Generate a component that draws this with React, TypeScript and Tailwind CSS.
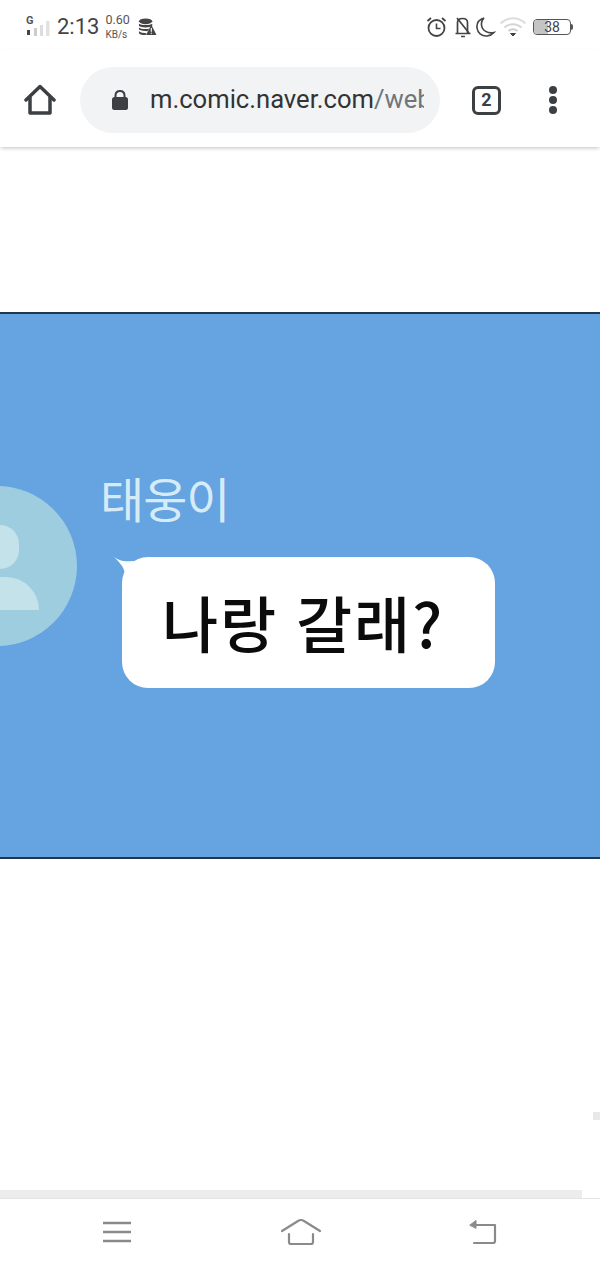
export default function App() {
  const sans = { fontFamily: '"Roboto","Liberation Sans",sans-serif' };
  const kr = { fontFamily: '"Noto Sans CJK KR",sans-serif' };
  return (
    <div className="w-[600px] h-[1267px] bg-white flex flex-col overflow-hidden" style={sans}>
      {/* status bar */}
      <div className="h-[50px] shrink-0 flex items-center pl-[26px] pr-[27px] pt-[3px] text-[#444]">
        <svg width="26" height="24" viewBox="0 0 26 24" className="mb-[1px]">
          <text x="0" y="10" fontSize="11" fontWeight="700" fill="#555" fontFamily="Roboto">G</text>
          <rect x="1" y="16" width="3" height="5" fill="#444" />
          <rect x="8" y="14" width="3" height="8" fill="#ccc" />
          <rect x="14" y="11" width="3" height="11" fill="#ddd" />
          <rect x="20" y="7" width="3.5" height="15" fill="#e2e2e2" />
        </svg>
        <span className="ml-[5px] text-[22px] leading-none text-[#444]">2:13</span>
        <div className="ml-[6px] w-[25px] flex flex-col items-start text-[#555]">
          <span className="text-[12.500px] leading-[14px]">0.60</span>
          <span className="text-[10px] leading-[13px] mt-[1px]">KB/s</span>
        </div>
        <svg width="19" height="20" viewBox="0 0 20 20" className="ml-[8px]">
          <ellipse cx="8" cy="4" rx="7" ry="3" fill="#444" />
          <path d="M1 6.500c2 2 12 2 14 0V9c-2 2-12 2-14 0zM1 10.500c2 2 9 2 11 1l-2 3c-3 0-7-.5-9-1.800zM1 14.500c2 1.500 5 2 8 2l-1 2c-3 0-6-.5-7-2z" fill="#444" />
          <path d="M14 7.500l5.500 11h-11z" fill="#444" />
          <rect x="13.400" y="11" width="1.200" height="4" fill="#fff" />
          <rect x="13.400" y="16" width="1.200" height="1.200" fill="#fff" />
        </svg>
        <div className="flex-1" />
        <svg width="21" height="22" viewBox="0 0 21 22" fill="none" stroke="#444" strokeWidth="1.800">
          <circle cx="10.500" cy="12" r="8" />
          <path d="M10.500 7.500V12.500H14.500" strokeWidth="1.600" />
          <path d="M1.500 5L5 2M19.500 5L16 2" />
        </svg>
        <svg width="18" height="22" viewBox="0 0 18 22" fill="none" stroke="#444" strokeWidth="1.700" className="ml-[7px]">
          <path d="M1.500 17.500H16.500M3.500 17.500V6.500C3.500 4 5.500 2.500 8.500 2.500S13.500 4 13.500 6.500V17.500" />
          <path d="M7 20.500H11M3 2L15 17" />
        </svg>
        <svg width="21" height="22" viewBox="0 0 21 22" fill="none" stroke="#444" strokeWidth="1.600" className="ml-[3px]">
          <path d="M9 2C4 3.500 1.500 7.500 2 12c.6 5 5 8.500 10 8 3-.3 5.500-1.800 7-3.500-6 1.500-12-2-12.500-7.500C6.200 6.500 7 4 9 2z" />
        </svg>
        <svg width="28" height="22" viewBox="0 0 28 22" fill="none" stroke="#ddd" strokeWidth="2" className="ml-[3px]">
          <path d="M1.500 7.500C9 .5 19 .5 26.500 7.500" />
          <path d="M5.500 11.500C10.500 7 17.500 7 22.500 11.500" stroke="#d5d5d5" />
          <path d="M9.500 15C12.500 12.700 15.500 12.700 18.500 15" stroke="#ccc" />
          <path d="M11.500 17.500H16.500L14 20z" fill="#444" stroke="#444" strokeWidth="1" strokeLinejoin="round" />
        </svg>
        <div className="ml-[6px] relative w-[38px] h-[16px] border border-[#555] rounded-[4px] overflow-hidden flex items-center justify-center">
          <div className="absolute left-0 top-0 bottom-0 w-[14px] bg-[#c4c4c4]" />
          <span className="relative text-[14px] leading-none text-[#444]">38</span>
        </div>
        <div className="w-[2px] h-[6px] bg-[#555] rounded-r-sm" />
      </div>

      {/* browser toolbar */}
      <div className="h-[97px] shrink-0 flex items-center shadow-[0_2px_4px_-1px_rgba(0,0,0,0.25)] relative pt-[3px] bg-white">
        <svg width="32" height="32" viewBox="0 0 32 32" fill="none" stroke="#3c4043" strokeWidth="3.500" strokeLinejoin="round" className="ml-[24px]">
          <path d="M2 16L16 2.500L30 16" strokeLinecap="round" />
          <path d="M6 13V29H26V13" />
        </svg>
        <div className="ml-[24px] w-[360px] h-[66px] rounded-[33px] bg-[#f1f3f4] flex items-center overflow-hidden pl-[31px] pr-[16px]">
          <svg width="18" height="22" viewBox="0 0 18 22" className="shrink-0 mb-[1px]">
            <path d="M4.500 9V6.500C4.500 3.500 6.500 2 9 2s4.500 1.500 4.500 4.500V9" fill="none" stroke="#3c4043" strokeWidth="2" />
            <rect x="1" y="8" width="16" height="13" rx="2.500" fill="#3c4043" />
          </svg>
          <div className="ml-[21px] overflow-hidden whitespace-nowrap text-[25.600px] leading-none text-[#333]">
            m.comic.naver.com<span className="text-[#70757a]">/webtoon</span>
          </div>
        </div>
        <div className="ml-[32px] w-[29px] h-[29px] border-[3px] border-[#3c4043] rounded-[6px] flex items-center justify-center text-[18px] font-bold leading-none text-[#3c4043]">
          2
        </div>
        <div className="ml-[48px] flex flex-col gap-[2px]">
          <div className="w-[8px] h-[8px] rounded-full bg-[#3c4043]" />
          <div className="w-[8px] h-[8px] rounded-full bg-[#3c4043]" />
          <div className="w-[8px] h-[8px] rounded-full bg-[#3c4043]" />
        </div>
      </div>

      {/* webtoon panel */}
      <div className="h-[165px] shrink-0" />
      <div className="h-[547px] shrink-0 bg-[#65a3e1] border-y-2 border-[#22364d] flex items-start overflow-hidden">
        <div className="shrink-0 w-[160px] h-[160px] rounded-full bg-[#9fcde0] ml-[-83px] mt-[172px] relative overflow-hidden">
          <div className="absolute left-[64px] top-[39px] w-[38px] h-[44px] rounded-full bg-[#c4e2ea]" />
          <div className="absolute left-[44px] top-[91px] w-[78px] h-[33px] rounded-t-[40px] bg-[#c4e2ea]" />
        </div>
        <div className="ml-[25px] flex flex-col items-start">
          <div className="mt-[153px] ml-[-2px] h-[60px] text-[48px] leading-[60px] text-[#d5ecf7] tracking-[-1px] font-normal" style={kr}>
            태웅이
          </div>
          <div className="relative mt-[30px] ml-[20px] w-[373px] h-[131px] rounded-[26px] bg-white flex items-center pl-[40px]">
            <svg width="24" height="22" viewBox="0 0 24 22" className="absolute left-[-9px] top-[-1px]">
              <path d="M0 0C4 4 10 6 20 5L22 6L12 18C11 10 5 5 0 0z" fill="#fdfeff" />
            </svg>
            <span className="text-[61px] leading-none text-[#0b0b0b] tracking-[2px] [word-spacing:2px] font-medium mb-[3px]" style={kr}>
              나랑 갈래?
            </span>
          </div>
        </div>
      </div>

      {/* remainder of page */}
      <div className="flex-1 flex flex-col items-end">
        <div className="flex-1" />
        <div className="w-[7px] h-[8px] bg-[#e8e8e8] mb-[70px]" />
      </div>
      <div className="h-[8px] shrink-0 w-[582px] bg-[#ececec]" />
      <div className="h-[1px] shrink-0 bg-[#e4e4e4]" />

      {/* navigation bar */}
      <div className="h-[68px] shrink-0 flex items-center justify-between pl-[103px] pr-[103px] pb-[3px]">
        <svg width="28" height="22" viewBox="0 0 28 22" stroke="#8a8a8a" strokeWidth="2.500">
          <path d="M0 2H28M0 11H28M0 20H28" />
        </svg>
        <svg width="40" height="28" viewBox="0 0 40 28" fill="none" stroke="#8a8a8a" strokeWidth="2.200" strokeLinecap="round" strokeLinejoin="round" className="ml-[1px]">
          <path d="M1 13L17 3Q20 1 23 3L39 13" />
          <path d="M8 16V24Q8 26 10 26H30Q32 26 32 24V16" />
        </svg>
        <svg width="28" height="26" viewBox="0 0 28 26" fill="none" stroke="#8a8a8a" strokeWidth="2.200" strokeLinecap="round" strokeLinejoin="round">
          <path d="M5 6H26V22Q26 24 24 24H5" />
          <path d="M1 6L7 1.500V9z" fill="#8a8a8a" strokeWidth="1" />
        </svg>
      </div>
    </div>
  );
}
